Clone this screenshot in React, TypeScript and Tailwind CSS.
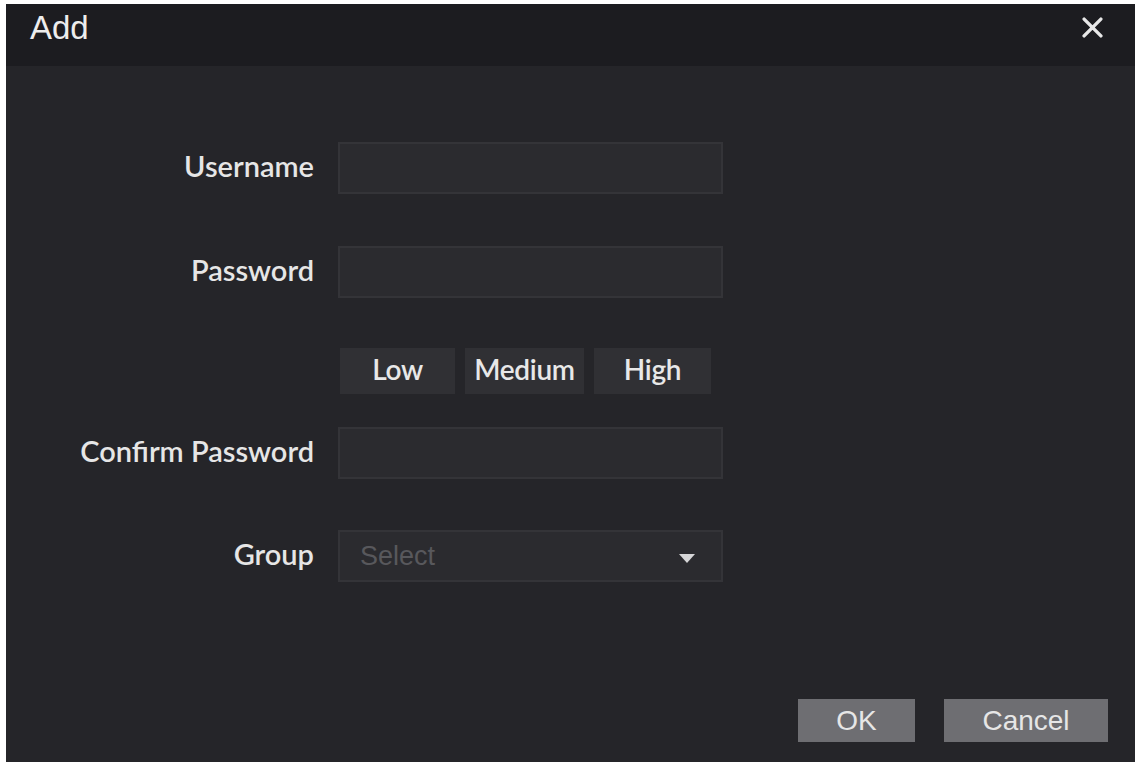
import React from "react";

function Row({ label, children }: { label: string; children: React.ReactNode }) {
  return (
    <div className="flex items-center">
      <div
        className="mb-[6px] w-[332px] pr-[24px] text-right text-[29px] leading-none text-[#e6e6e6]"
        style={{ fontFamily: "Lato, 'Open Sans', sans-serif", fontWeight: 600 }}
      >
        {label}
      </div>
      {children}
    </div>
  );
}

function Field() {
  return <div className="h-[52px] w-[385px] border-2 border-[#343438] bg-[#2b2b2f]" />;
}

export default function App() {
  return (
    <div className="h-[762px] w-[1140px] bg-white pl-[6px] pr-[5px] pt-[4px]">
      <div className="flex h-full flex-col bg-[#252529]">
        <div className="flex h-[62px] items-start justify-between bg-[#1c1c20] pl-[24px] pr-[32px]">
          <span
            className="mt-[6px] text-[33px] leading-[36px] text-[#ededed]"
            style={{ fontFamily: "'Liberation Sans', Arial, sans-serif" }}
          >
            Add
          </span>
          <svg width="21" height="21" viewBox="0 0 20 20" className="mt-[13px]">
            <path d="M2 2 L18 18 M18 2 L2 18" stroke="#e8e8e8" strokeWidth="3.2" strokeLinecap="round" />
          </svg>
        </div>
        <div className="flex flex-1 flex-col pt-[76px]">
          <div className="flex flex-col">
            <Row label="Username">
              <Field />
            </Row>
            <div className="h-[52px]" />
            <Row label="Password">
              <Field />
            </Row>
            <div className="mt-[50px] flex gap-[10px] pl-[334px]">
              {[
                ["Low", "w-[115px]"],
                ["Medium", "w-[119px]"],
                ["High", "w-[117px]"],
              ].map(([t, w]) => (
                <div
                  key={t}
                  className={`flex h-[46px] ${w} items-center justify-center bg-[#303034] pb-[4px] text-[28px] text-[#e8e8e8] tracking-[-0.3px]`}
                  style={{ fontFamily: "Lato, 'Open Sans', sans-serif", fontWeight: 600 }}
                >
                  {t}
                </div>
              ))}
            </div>
            <div className="h-[33px]" />
            <Row label="Confirm Password">
              <Field />
            </Row>
            <div className="h-[51px]" />
            <Row label="Group">
              <div className="flex h-[52px] w-[385px] items-center justify-between border-2 border-[#343438] bg-[#2b2b2f] pl-[20px] pr-[26px]">
                <span
                  className="text-[27px] text-[#58585c]"
                  style={{ fontFamily: "'Liberation Sans', Arial, sans-serif" }}
                >
                  Select
                </span>
                <svg width="16" height="10" viewBox="0 0 16 10" className="mt-[6px]">
                  <path d="M0 0 L16 0 L8 9 Z" fill="#d6d6d8" />
                </svg>
              </div>
            </Row>
          </div>
          <div className="mt-auto mb-[20px] flex justify-end gap-[29px] pr-[27px]">
            <div
              className="flex h-[43px] w-[117px] items-center justify-center bg-[#6e6e72] text-[28px] text-[#e6e6e6]"
              style={{ fontFamily: "'Liberation Sans', Arial, sans-serif" }}
            >
              OK
            </div>
            <div
              className="flex h-[43px] w-[164px] items-center justify-center bg-[#6e6e72] text-[28px] text-[#e6e6e6]"
              style={{ fontFamily: "'Liberation Sans', Arial, sans-serif" }}
            >
              Cancel
            </div>
          </div>
        </div>
      </div>
    </div>
  );
}
